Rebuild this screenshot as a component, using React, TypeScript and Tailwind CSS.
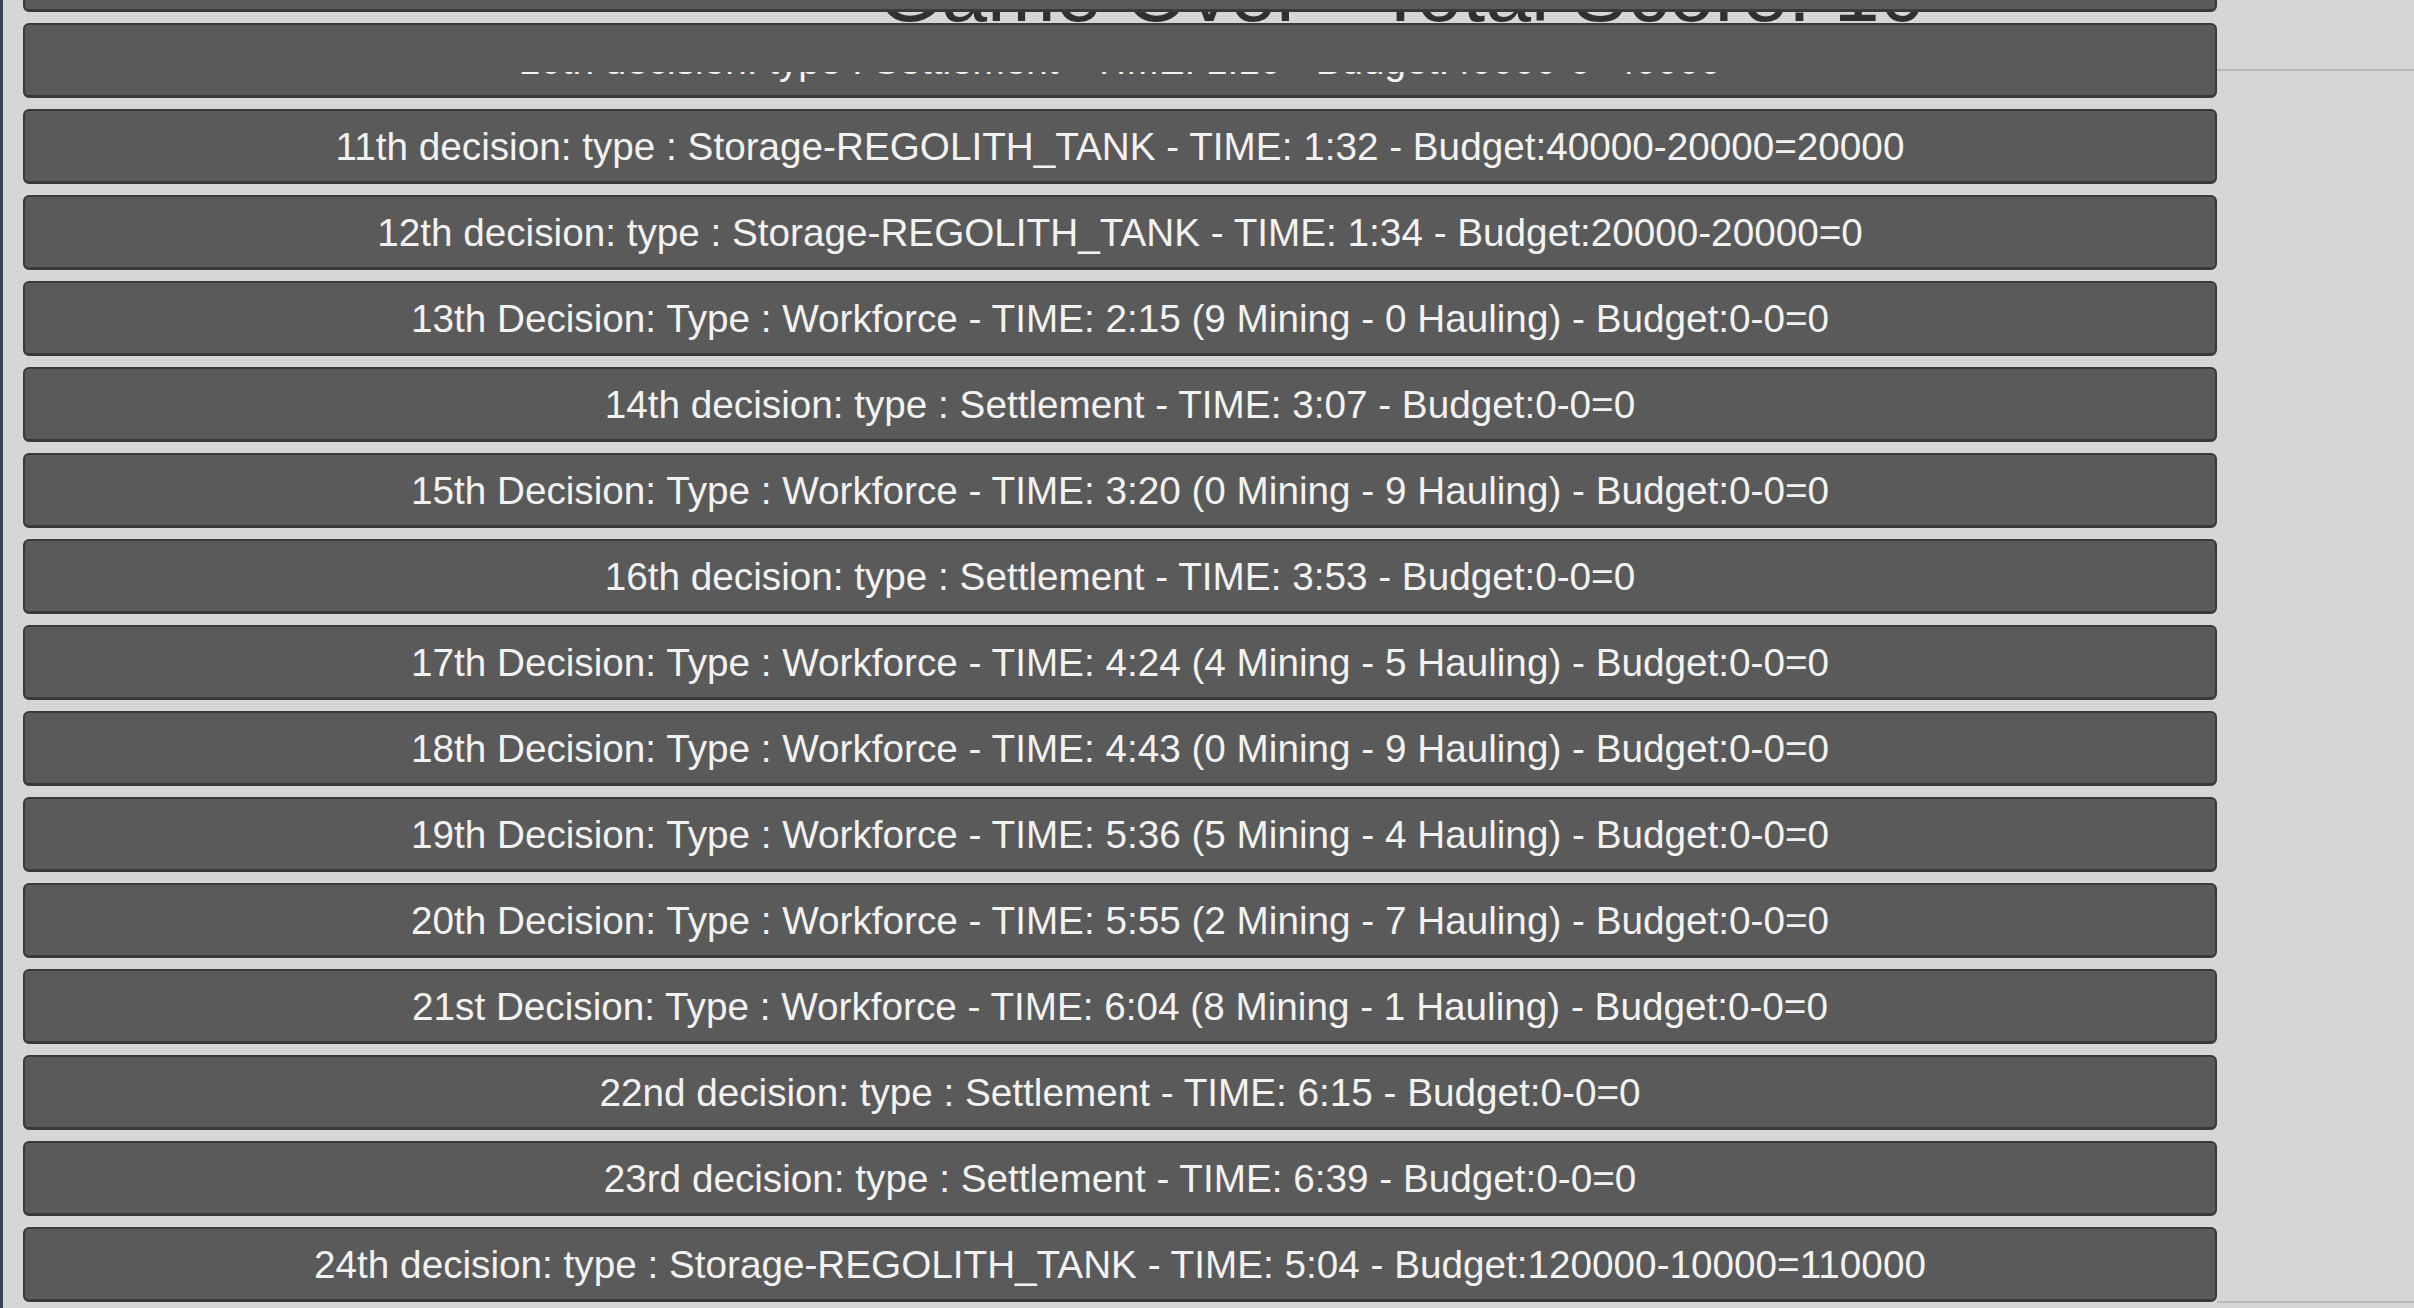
const rows = [
  "",
  "10th decision: type : Settlement - TIME: 1:10 - Budget:40000-0=40000",
  "11th decision: type : Storage-REGOLITH_TANK - TIME: 1:32 - Budget:40000-20000=20000",
  "12th decision: type : Storage-REGOLITH_TANK - TIME: 1:34 - Budget:20000-20000=0",
  "13th Decision: Type : Workforce - TIME: 2:15 (9 Mining - 0 Hauling) - Budget:0-0=0",
  "14th decision: type : Settlement - TIME: 3:07 - Budget:0-0=0",
  "15th Decision: Type : Workforce - TIME: 3:20 (0 Mining - 9 Hauling) - Budget:0-0=0",
  "16th decision: type : Settlement - TIME: 3:53 - Budget:0-0=0",
  "17th Decision: Type : Workforce - TIME: 4:24 (4 Mining - 5 Hauling) - Budget:0-0=0",
  "18th Decision: Type : Workforce - TIME: 4:43 (0 Mining - 9 Hauling) - Budget:0-0=0",
  "19th Decision: Type : Workforce - TIME: 5:36 (5 Mining - 4 Hauling) - Budget:0-0=0",
  "20th Decision: Type : Workforce - TIME: 5:55 (2 Mining - 7 Hauling) - Budget:0-0=0",
  "21st Decision: Type : Workforce - TIME: 6:04 (8 Mining - 1 Hauling) - Budget:0-0=0",
  "22nd decision: type : Settlement - TIME: 6:15 - Budget:0-0=0",
  "23rd decision: type : Settlement - TIME: 6:39 - Budget:0-0=0",
  "24th decision: type : Storage-REGOLITH_TANK - TIME: 5:04 - Budget:120000-10000=110000",
];

function DecisionRow({ text, clipped }: { text: string; clipped?: boolean }) {
  return (
    <div className="h-[75px] shrink-0 rounded-[6px] border-2 border-b-[3px] border-[#3a3a3a] bg-[#5a5a5a]">
      <div
        className={
          clipped
            ? "flex h-full w-full items-center justify-center pt-[2px] [clip-path:inset(47px_0_0_0)]"
            : "flex h-full w-full items-center justify-center pt-[2px]"
        }
      >
        <span className="whitespace-nowrap text-[38.7px] text-[#f2f2f2]">{text}</span>
      </div>
    </div>
  );
}

export default function App() {
  return (
    <div className="relative flex h-[1308px] w-[2414px] overflow-hidden bg-[#d6d6d6] font-['Liberation_Sans',Arial,sans-serif]">
      <div className="w-[3px] shrink-0 bg-[#3a4353]" />

      {/* title sits behind the scroll list, only its bottom shows */}
      <div className="absolute left-[877px] top-[-49px] whitespace-nowrap text-[82.5px] leading-[82px] text-[#303030]">
        Game Over - Total Score: 10
      </div>

      <div className="relative z-10 ml-[20px] mt-[-63px] flex w-[2194px] shrink-0 flex-col gap-[11px]">
        {rows.map((r, i) => (
          <DecisionRow key={i} text={r} clipped={i === 1} />
        ))}
      </div>

      <div className="mt-[69px] h-[1234px] flex-1 border-y-2 border-[#bababa]" />
    </div>
  );
}
